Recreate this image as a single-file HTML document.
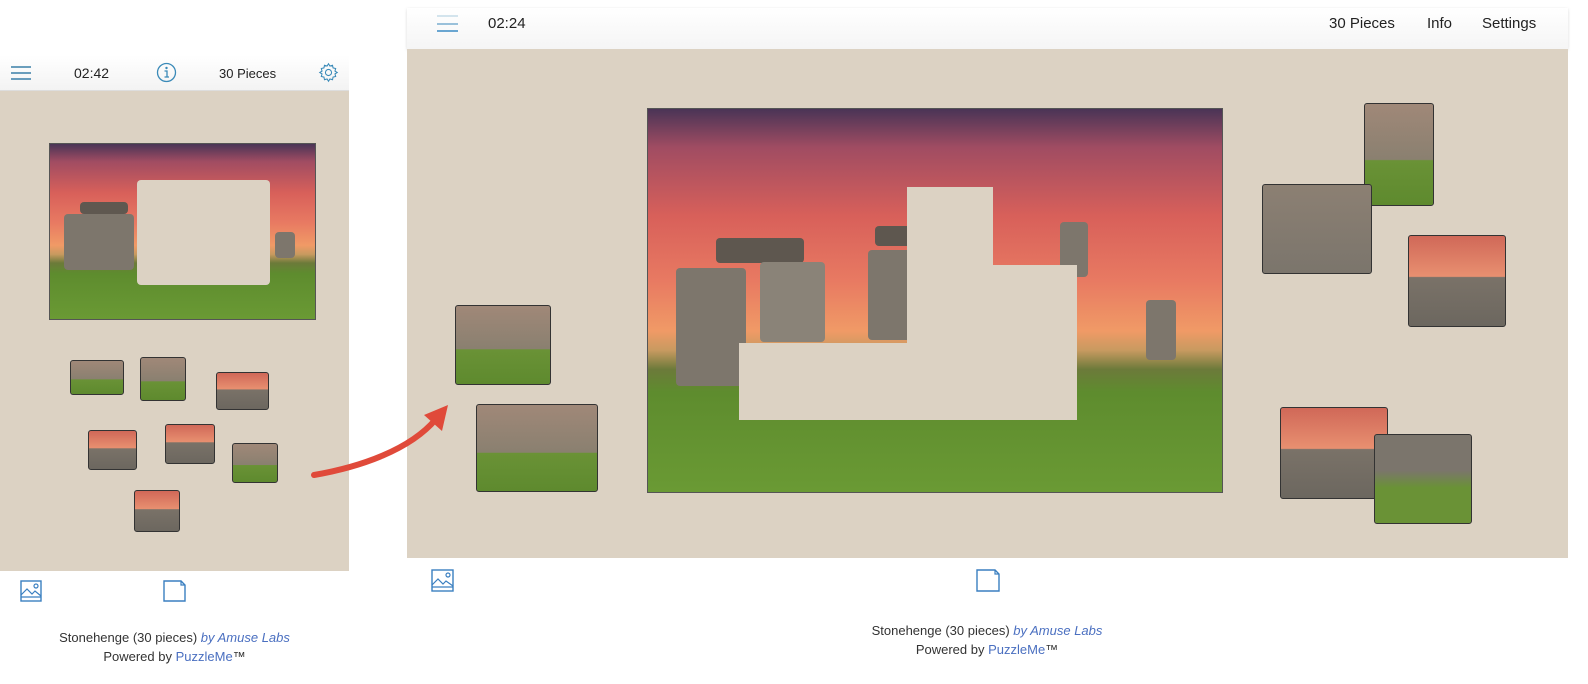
<!DOCTYPE html>
<html><head><meta charset="utf-8"><style>
*{margin:0;padding:0;box-sizing:border-box}
body{width:1588px;height:684px;background:#fff;position:relative;overflow:hidden;font-family:"Liberation Sans",Arial,sans-serif;color:#222}
.a{position:absolute}
.beige{background:#dcd2c3}
.pic{background:linear-gradient(180deg,#4a3456 0%,#a04c62 10%,#d8605a 28%,#e87a62 45%,#f09a66 58%,#c89a60 63%,#6c7a3a 68%,#5e8c2e 74%,#6a9a34 100%)}
.stone{background:#7d766c;border-radius:4px}
.hole{background:#dcd2c3}
.pc{background:linear-gradient(180deg,#a08878,#8a8070 55%,#6a9236 56%,#5e8a2e);border:1px solid #333;border-radius:3px}
.pc2{background:linear-gradient(180deg,#d06858,#e89070 45%,#7a7268 46%,#6c675f)}
.ft{font-size:13px;text-align:center;line-height:19px;color:#333}
.ft i{color:#4a6fc0}.ft span{color:#4a6fc0}
</style></head><body>

<!-- Left mobile -->
<div class="a" style="left:0;top:55px;width:349px;height:36px;background:linear-gradient(#fff,#f3f3f3);border-bottom:1px solid #ddd"></div>
<svg class="a" style="left:10px;top:65px" width="22" height="16"><g stroke="#3a7fa8" stroke-width="1.5"><line x1="1" y1="2" x2="21" y2="2"/><line x1="1" y1="8" x2="21" y2="8"/><line x1="1" y1="14" x2="21" y2="14"/></g></svg>
<div class="a" style="left:74px;top:65px;font-size:14px">02:42</div>
<svg class="a" style="left:156px;top:62px" width="21" height="21"><circle cx="10.5" cy="10.5" r="9" fill="none" stroke="#3a8ab8" stroke-width="1.3"/><circle cx="10.5" cy="6" r="1.2" fill="#3a8ab8"/><path d="M8.5 9h2.5v6M8.5 15h4.5" stroke="#3a8ab8" stroke-width="1.3" fill="none"/></svg>
<div class="a" style="left:219px;top:66px;font-size:13px">30 Pieces</div>
<svg class="a" style="left:318px;top:62px" width="21" height="21" viewBox="0 0 24 24"><path d="M12 2l1.6 2.6 3-.8.6 3 3 .6-.8 3L22 12l-2.6 1.6.8 3-3 .6-.6 3-3-.8L12 22l-1.6-2.6-3 .8-.6-3-3-.6.8-3L2 12l2.6-1.6-.8-3 3-.6.6-3 3 .8z" fill="none" stroke="#3a8ab8" stroke-width="1.2"/><circle cx="12" cy="12" r="3.5" fill="none" stroke="#3a8ab8" stroke-width="1.2"/></svg>
<div class="a beige" style="left:0;top:91px;width:349px;height:480px"></div>
<div class="a pic" style="left:49px;top:143px;width:267px;height:177px;border:1px solid #555"></div>
<div class="a stone" style="left:80px;top:202px;width:48px;height:12px;background:#5f5850"></div>
<div class="a stone" style="left:64px;top:214px;width:70px;height:56px"></div>
<div class="a hole" style="left:137px;top:180px;width:133px;height:105px;border-radius:4px"></div>
<div class="a stone" style="left:275px;top:232px;width:20px;height:26px"></div>
<div class="a pc" style="left:70px;top:360px;width:54px;height:35px"></div>
<div class="a pc" style="left:140px;top:357px;width:46px;height:44px"></div>
<div class="a pc pc2" style="left:216px;top:372px;width:53px;height:38px"></div>
<div class="a pc pc2" style="left:88px;top:430px;width:49px;height:40px"></div>
<div class="a pc pc2" style="left:165px;top:424px;width:50px;height:40px"></div>
<div class="a pc" style="left:232px;top:443px;width:46px;height:40px"></div>
<div class="a pc pc2" style="left:134px;top:490px;width:46px;height:42px"></div>
<svg class="a" style="left:20px;top:580px" width="22" height="22"><rect x="1" y="1" width="20" height="20" fill="none" stroke="#3a7fc0" stroke-width="1.4"/><path d="M1 15l6-6 5 5 3-3 6 5M1 17h20" fill="none" stroke="#3a7fc0" stroke-width="1.2"/><circle cx="16" cy="6" r="2" fill="none" stroke="#3a7fc0" stroke-width="1.2"/></svg>
<svg class="a" style="left:163px;top:580px" width="23" height="22"><path d="M1 1h17l4 4v16H1z" fill="none" stroke="#3a7fc0" stroke-width="1.4"/><path d="M18 1v4h4" fill="none" stroke="#3a7fc0" stroke-width="1.2"/></svg>
<div class="a ft" style="left:0;top:628px;width:349px">Stonehenge (30 pieces) <i>by <span>Amuse Labs</span></i><br>Powered by <span>PuzzleMe</span>™</div>

<!-- Right desktop -->
<div class="a" style="left:407px;top:8px;width:1161px;height:41px;background:linear-gradient(#fff,#f5f5f5);box-shadow:0 1px 3px rgba(0,0,0,.15)"></div>
<svg class="a" style="left:436px;top:14px" width="22" height="20"><g stroke-width="1.5"><line x1="1" y1="2" x2="22" y2="2" stroke="#c5dbe8"/><line x1="1" y1="10" x2="22" y2="10" stroke="#7aaed0"/><line x1="1" y1="17" x2="22" y2="17" stroke="#3a8ac4"/></g></svg>
<div class="a" style="left:488px;top:15px;font-size:15px">02:24</div>
<div class="a" style="left:1329px;top:15px;font-size:15px">30 Pieces</div>
<div class="a" style="left:1427px;top:15px;font-size:15px">Info</div>
<div class="a" style="left:1482px;top:15px;font-size:15px">Settings</div>
<div class="a beige" style="left:407px;top:49px;width:1161px;height:509px"></div>
<div class="a pic" style="left:647px;top:108px;width:576px;height:385px;border:1px solid #555"></div>
<div class="a stone" style="left:716px;top:238px;width:88px;height:25px;background:#5e574f"></div>
<div class="a stone" style="left:676px;top:268px;width:70px;height:118px"></div>
<div class="a stone" style="left:760px;top:262px;width:65px;height:80px;background:#8a8378"></div>
<div class="a stone" style="left:875px;top:226px;width:55px;height:20px;background:#5e574f"></div>
<div class="a stone" style="left:868px;top:250px;width:58px;height:90px"></div>
<div class="a stone" style="left:1060px;top:222px;width:28px;height:55px"></div>
<div class="a stone" style="left:1146px;top:300px;width:30px;height:60px"></div>
<div class="a hole" style="left:907px;top:187px;width:86px;height:100px"></div>
<div class="a hole" style="left:907px;top:265px;width:170px;height:155px"></div>
<div class="a hole" style="left:739px;top:343px;width:338px;height:77px"></div>
<div class="a pc" style="left:455px;top:305px;width:96px;height:80px"></div>
<div class="a pc" style="left:476px;top:404px;width:122px;height:88px"></div>
<div class="a pc" style="left:1364px;top:103px;width:70px;height:103px"></div>
<div class="a pc" style="left:1262px;top:184px;width:110px;height:90px;background:linear-gradient(#8c8073,#7b756c)"></div>
<div class="a pc pc2" style="left:1408px;top:235px;width:98px;height:92px"></div>
<div class="a pc pc2" style="left:1280px;top:407px;width:108px;height:92px"></div>
<div class="a pc" style="left:1374px;top:434px;width:98px;height:90px;background:linear-gradient(#7b756c 40%,#6a9236 60%)"></div>
<svg class="a" style="left:431px;top:569px" width="23" height="23"><rect x="1" y="1" width="21" height="21" fill="none" stroke="#3a7fc0" stroke-width="1.4"/><path d="M1 16l6-6 5 5 3-3 7 5M1 18h21" fill="none" stroke="#3a7fc0" stroke-width="1.2"/><circle cx="17" cy="6" r="2" fill="none" stroke="#3a7fc0" stroke-width="1.2"/></svg>
<svg class="a" style="left:976px;top:569px" width="24" height="23"><path d="M1 1h18l4 4v17H1z" fill="none" stroke="#3a7fc0" stroke-width="1.4"/><path d="M19 1v4h4" fill="none" stroke="#3a7fc0" stroke-width="1.2"/></svg>
<div class="a ft" style="left:787px;top:621px;width:400px">Stonehenge (30 pieces) <i>by <span>Amuse Labs</span></i><br>Powered by <span>PuzzleMe</span>™</div>

<!-- arrow on top -->
<svg class="a" style="left:300px;top:395px;z-index:5" width="160" height="95"><path d="M14 80 C60 72 110 55 136 24" fill="none" stroke="#e04a3a" stroke-width="6" stroke-linecap="round"/><path d="M148 10 L124 20 L142 36 Z" fill="#e04a3a"/></svg>
</body></html>
